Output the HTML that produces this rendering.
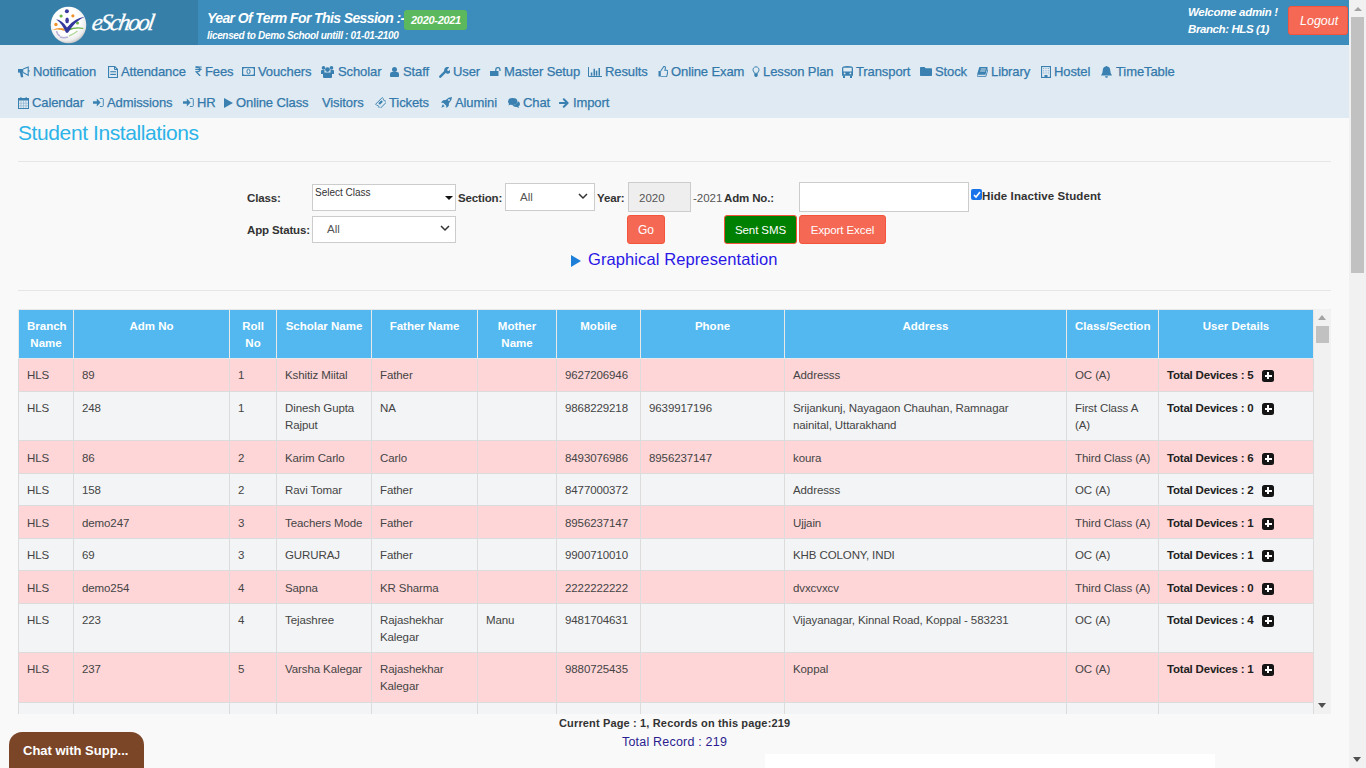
<!DOCTYPE html>
<html><head><meta charset="utf-8">
<style>
*{box-sizing:border-box;margin:0;padding:0}
html,body{width:1366px;height:768px;overflow:hidden;background:#f9f9f9;font-family:"Liberation Sans",sans-serif;color:#333}
.abs{position:absolute}
#hdr{position:absolute;left:0;top:0;width:1349px;height:45px;background:#3c8dbc}
#logo{position:absolute;left:0;top:0;width:198px;height:45px;background:#367fa9}
.wt{color:#fff;font-weight:bold;font-style:italic;white-space:nowrap;position:absolute}
#nav{position:absolute;left:0;top:45px;width:1349px;height:73px;background:#dfeaf2}
.ni{position:absolute;font-size:13px;color:#3378ab;white-space:nowrap;line-height:15px;letter-spacing:-0.1px;-webkit-text-stroke:0.25px #3378ab}
.ic{position:absolute;line-height:0}
.ic svg{display:block}
#vs{position:absolute;left:1349px;top:0;width:17px;height:768px;background:#f1f1f1}
.sel{position:absolute;background:#fff;border:1px solid #ccc}
.lbl{position:absolute;font-weight:bold;font-size:11.5px;letter-spacing:-0.15px;color:#333;white-space:nowrap;line-height:14px}
.btn{position:absolute;color:#fff;font-size:12px;text-align:center;border-radius:3px}
#tbl{position:absolute;left:0;top:0;border-collapse:collapse;table-layout:fixed;width:1295px}
#tbl td,#tbl th{border:1px solid #dcdcdc;padding:0 8px;vertical-align:top;font-size:11.5px;line-height:17px;overflow:hidden;white-space:nowrap;letter-spacing:-0.1px}
#tbl th{background:#52b8ef;color:#fff;text-align:center;font-weight:bold;padding-top:8px;border-color:#e8e8e8;letter-spacing:0}
#tbl td{padding-top:8px;color:#444}
#tbl tr.p td{background:#ffd6d8}
#tbl tr.g td{background:#f3f4f6}
.dev{font-weight:bold;color:#222;letter-spacing:-0.2px}
.plus{display:inline-block;width:12px;height:12.5px;background:#151515;border-radius:2.5px;position:relative;vertical-align:-3px;margin-left:8.5px}
.plus:before{content:"";position:absolute;left:2.5px;top:5.5px;width:7px;height:1.6px;background:#fff}
.plus:after{content:"";position:absolute;left:5.2px;top:2.8px;width:1.6px;height:7px;background:#fff}
</style></head><body>
<div id="hdr">
  <div id="logo">
    <div class="abs" style="left:48px;top:4px;line-height:0"><svg width="42" height="42" viewBox="0 0 42 42"><defs><radialGradient id="lg" cx="0.45" cy="0.4" r="0.6"><stop offset="0.6" stop-color="#ffffff"/><stop offset="0.88" stop-color="#ececec"/><stop offset="1" stop-color="#c9c9c9"/></radialGradient></defs>
<ellipse cx="20.5" cy="21" rx="17.8" ry="18.3" fill="url(#lg)"/>
<circle cx="18.9" cy="7.2" r="2" fill="#3b3a9e"/>
<circle cx="13.1" cy="12" r="1.6" fill="#6ab446"/>
<circle cx="24.9" cy="11.8" r="1.6" fill="#f0922a"/>
<circle cx="7.9" cy="20.5" r="1.7" fill="#f0922a"/>
<circle cx="29.5" cy="19.1" r="1.5" fill="#6ab446"/>
<ellipse cx="19.1" cy="16.4" rx="1.8" ry="2.8" fill="#3b3a9e"/>
<path d="M4.5 26q5-3 11.5-1.5l1 2.5q-6-2.5-12.5-1z" fill="#f0922a"/>
<path d="M20 25q8-3 15.5-1l-0.5 1q-7-1.5-14 1.5z" fill="#6ab446"/>
<path d="M8 15.3Q14 16 19 23.5Q26 14.5 36.8 12.8Q27 17 20 28.8H18Q14 19.5 8 15.3z" fill="#33399a"/>
<path d="M8.5 27q1 4 3.5 5M12 33q4 1.5 8 0" stroke="#b8b0d8" stroke-width="1.4" fill="none"/>
<path d="M21 32q5-2 8.5-5" stroke="#b5d9a0" stroke-width="1.4" fill="none"/>
</svg></div>
    <div class="abs" style="left:90px;top:9.5px;font-family:'Liberation Serif',serif;font-style:italic;font-size:23.5px;line-height:25px;color:#fff;letter-spacing:-2px;transform:skewX(-10deg);transform-origin:0 100%;-webkit-text-stroke:0.3px #fff">eSchool</div>
  </div>
  <div class="wt" style="left:207px;top:11px;font-size:14px;letter-spacing:-0.6px;line-height:15px">Year Of Term For This Session :-</div>
  <div class="abs" style="left:404px;top:10px;width:63px;height:20px;background:#5cb85c;border-radius:3px"></div>
  <div class="wt" style="left:411px;top:14px;font-size:11px;letter-spacing:-0.3px;line-height:12px">2020-2021</div>
  <div class="wt" style="left:207px;top:30px;font-size:10px;letter-spacing:-0.33px;line-height:11px">licensed to Demo School untill : 01-01-2100</div>
  <div class="wt" style="left:1188px;top:6px;font-size:11.5px;letter-spacing:-0.3px;line-height:12px">Welcome admin !</div>
  <div class="wt" style="left:1188px;top:23px;font-size:11.5px;letter-spacing:-0.4px;line-height:12px">Branch: HLS (1)</div>
  <div class="abs" style="left:1288px;top:6px;width:60px;height:29px;background:#f56954;border:1px solid #f4543c;border-radius:3px"></div>
  <div class="abs" style="left:1300px;top:14px;font-size:12.5px;line-height:15px;font-style:italic;color:#fff">Logout</div>
</div>
<div id="nav">
<div class="ic" style="left:18px;top:21px"><svg width="12" height="12" viewBox="0 0 12 12"><path d="M0 3h5.3v3.6h-5.3z" fill="#3a80b0"/><path d="M1.8 6h2.8l0.6 5.2h-2.3z" fill="#3a80b0"/><path d="M5.2 3.1L10.2 1v8.4L5.2 6.6" stroke="#3a80b0" stroke-width="1.1" fill="none"/><path d="M10.3 4h1.2v1.8h-1.2z" fill="#3a80b0"/></svg></div>
<div class="ni" style="left:33px;top:19px">Notification</div>
<div class="ic" style="left:108px;top:21px"><svg width="10" height="12" viewBox="0 0 10 12"><path d="M0.55 0.55h6.2l2.7 2.7v8.2h-8.9z" fill="none" stroke="#3a80b0" stroke-width="1.1"/><path d="M6.5 0.5v3h3" fill="none" stroke="#3a80b0" stroke-width="1"/><path d="M2.3 5.7h5.6M2.3 8.5h5.6" stroke="#3a80b0" stroke-width="1"/><path d="M2.3 7.1h5.6" stroke="#3a80b0" stroke-width="0.8" opacity="0.35"/></svg></div>
<div class="ni" style="left:121px;top:19px">Attendance</div>
<div class="ic" style="left:195px;top:21px"><svg width="7" height="10" viewBox="0 0 7 10"><path d="M0.3 1h6.4M0.3 3.4h6.4" stroke="#3a80b0" stroke-width="1.2"/><path d="M0.8 1q4.2 0 4.2 2.4 0 2.3-3.8 2.4l4 4.2" stroke="#3a80b0" stroke-width="1.3" fill="none"/></svg></div>
<div class="ni" style="left:205px;top:19px">Fees</div>
<div class="ic" style="left:242px;top:22px"><svg width="13" height="9" viewBox="0 0 13 9"><rect x="0.6" y="0.6" width="11.8" height="7.8" fill="none" stroke="#3a80b0" stroke-width="1.2"/><path d="M0 0h3l-3 3zM13 0h-3l3 3zM0 9h3l-3-3zM13 9h-3l3-3z" fill="#3a80b0"/><ellipse cx="6.5" cy="4.5" rx="1.6" ry="2.3" fill="none" stroke="#3a80b0" stroke-width="1"/></svg></div>
<div class="ni" style="left:258px;top:19px">Vouchers</div>
<div class="ic" style="left:321px;top:21px"><svg width="13" height="12" viewBox="0 0 13 12"><circle cx="2.5" cy="1.9" r="1.8" fill="#3a80b0"/><circle cx="10.5" cy="1.9" r="1.8" fill="#3a80b0"/><circle cx="6.5" cy="3.6" r="2.4" fill="#3a80b0"/><path d="M0 5q0-1 1-1h2.5v4h-3.5zM13 5q0-1-1-1h-2.5v4h3.5z" fill="#3a80b0"/><path d="M2 8q0-1.5 1.5-1.5h6q1.5 0 1.5 1.5v3q0 1-1 1h-7q-1 0-1-1z" fill="#3a80b0"/></svg></div>
<div class="ni" style="left:338px;top:19px">Scholar</div>
<div class="ic" style="left:390px;top:22px"><svg width="9" height="10" viewBox="0 0 9 10"><circle cx="4.5" cy="2.5" r="2.5" fill="#3a80b0"/><path d="M0 7q0-2 2-2h5q2 0 2 2v2.2q0 0.8-0.8 0.8h-7.4q-0.8 0-0.8-0.8z" fill="#3a80b0"/></svg></div>
<div class="ni" style="left:403px;top:19px">Staff</div>
<div class="ic" style="left:439px;top:22px"><svg width="11" height="11" viewBox="0 0 11 11"><path d="M1.3 9.7l5-5" stroke="#3a80b0" stroke-width="2.4" stroke-linecap="round"/><path d="M5.2 3.8a3.3 3.3 0 0 1 5-3.4l-2 2.1 0.3 1.2 1.2 0.3 2-2a3.3 3.3 0 0 1-4.2 4.5z" fill="#3a80b0"/></svg></div>
<div class="ni" style="left:453px;top:19px">User</div>
<div class="ic" style="left:490px;top:22px"><svg width="11" height="9" viewBox="0 0 11 9"><rect x="0" y="4" width="8.5" height="5" fill="#3a80b0"/><path d="M5.8 4.5v-1.8a2.1 2.1 0 0 1 4.2 0v1.3" stroke="#3a80b0" stroke-width="1.3" fill="none"/></svg></div>
<div class="ni" style="left:504px;top:19px">Master Setup</div>
<div class="ic" style="left:588px;top:22px"><svg width="14" height="10" viewBox="0 0 14 10"><path d="M0.5 0v9.5h13.5" stroke="#3a80b0" stroke-width="1" fill="none"/><path d="M2.8 5.5h1.5v3.3h-1.5zM5.5 1.8h1.5v7h-1.5zM7.8 3.8h1.5v5h-1.5zM10.5 1h1.5v7.8h-1.5z" fill="#3a80b0"/></svg></div>
<div class="ni" style="left:605px;top:19px">Results</div>
<div class="ic" style="left:658px;top:21px"><svg width="10" height="11" viewBox="0 0 10 11"><path d="M0.5 5h2.3v5.5h-2.3z" fill="#3a80b0"/><path d="M2.8 5l2.4-3.8q0.3-0.7 1-0.7q1.3 0 1.3 1.3l-0.6 2.5h2q1 0 0.9 1l-0.9 4.5q-0.3 1-1.3 1h-4.8" fill="none" stroke="#3a80b0" stroke-width="1.05"/></svg></div>
<div class="ni" style="left:671px;top:19px">Online Exam</div>
<div class="ic" style="left:752px;top:21px"><svg width="8" height="11" viewBox="0 0 8 11"><path d="M2.4 7.3q-0.2-1.3-1.2-2.4a3 3 0 1 1 5.6 0q-1 1.1-1.2 2.4z" fill="none" stroke="#3a80b0" stroke-width="1"/><path d="M2.3 7.8h3.4v1.6q-0.4 1.6-1.7 1.6t-1.7-1.6z" fill="#3a80b0"/></svg></div>
<div class="ni" style="left:763px;top:19px">Lesson Plan</div>
<div class="ic" style="left:842px;top:21px"><svg width="11" height="12" viewBox="0 0 11 12"><path d="M0 2.3q0-2.3 5.5-2.3t5.5 2.3v7.5h-11z" fill="#3a80b0"/><rect x="1.3" y="1.8" width="8.4" height="3.6" rx="0.5" fill="#dfeaf2"/><circle cx="2.6" cy="7.4" r="0.9" fill="#dfeaf2"/><circle cx="8.4" cy="7.4" r="0.9" fill="#dfeaf2"/><path d="M1 9.5h2v2.5h-2zM8 9.5h2v2.5h-2z" fill="#3a80b0"/></svg></div>
<div class="ni" style="left:856px;top:19px">Transport</div>
<div class="ic" style="left:920px;top:22px"><svg width="12" height="9" viewBox="0 0 12 9"><path d="M0 0.8q0-0.8 0.8-0.8h3.7l1.2 1.2h5.5q0.8 0 0.8 0.8v6.2q0 0.8-0.8 0.8h-10.4q-0.8 0-0.8-0.8z" fill="#3a80b0"/></svg></div>
<div class="ni" style="left:935px;top:19px">Stock</div>
<div class="ic" style="left:977px;top:22px"><svg width="11" height="10" viewBox="0 0 11 10"><path d="M2.3 0h8.4l-2.3 7.8h-8.4z" fill="#3a80b0"/><path d="M0.3 7.8l-0.1 1q0 0.6 0.6 0.6h8.1l2.3-8" stroke="#3a80b0" stroke-width="0.9" fill="none"/><path d="M3.8 2h5M3.2 4h5" stroke="#dfeaf2" stroke-width="0.9"/></svg></div>
<div class="ni" style="left:991px;top:19px">Library</div>
<div class="ic" style="left:1041px;top:21px"><svg width="10" height="12" viewBox="0 0 10 12"><rect x="0.55" y="0.55" width="8.9" height="10.9" fill="none" stroke="#3a80b0" stroke-width="1.1"/><path d="M2.2 2h1v1h-1zM4.5 2h1v1h-1zM6.8 2h1v1h-1zM2.2 4.3h1v1h-1zM4.5 4.3h1v1h-1zM6.8 4.3h1v1h-1zM2.2 6.6h1v1h-1zM4.5 6.6h1v1h-1zM6.8 6.6h1v1h-1z" fill="#3a80b0" opacity="0.6"/><path d="M3.5 9h3v3h-3z" fill="#3a80b0"/></svg></div>
<div class="ni" style="left:1054px;top:19px">Hostel</div>
<div class="ic" style="left:1101px;top:21px"><svg width="11" height="12" viewBox="0 0 11 12"><path d="M5.5 0.5q3.8 0 3.8 4.3q0 3 1.7 4.7h-11q1.7-1.7 1.7-4.7q0-4.3 3.8-4.3z" fill="#3a80b0"/><circle cx="5.5" cy="0.8" r="0.8" fill="#3a80b0"/><path d="M4 10.3a1.5 1.5 0 0 0 3 0z" fill="#3a80b0"/></svg></div>
<div class="ni" style="left:1116px;top:19px">TimeTable</div>
<div class="ic" style="left:18px;top:52px"><svg width="11" height="12" viewBox="0 0 11 12"><rect x="0.5" y="1.5" width="10" height="10" fill="none" stroke="#3a80b0" stroke-width="1"/><path d="M0.5 1.5h10v2h-10z" fill="#3a80b0"/><path d="M2.8 0.3v2.2M8.2 0.3v2.2" stroke="#3a80b0" stroke-width="1.3"/><path d="M3 3.5v8M5.5 3.5v8M8 3.5v8M0.5 6.2h10M0.5 8.8h10" stroke="#3a80b0" stroke-width="0.6" opacity="0.55"/></svg></div>
<div class="ni" style="left:32px;top:50px">Calendar</div>
<div class="ic" style="left:93px;top:53px"><svg width="11" height="9" viewBox="0 0 11 9"><path d="M0 3.2h3.8v-2.7l3.8 4-3.8 4v-2.7h-3.8z" fill="#3a80b0"/><path d="M6.8 0.5h2.6q0.9 0 0.9 0.9v6.2q0 0.9-0.9 0.9h-2.6" stroke="#3a80b0" stroke-width="0.9" fill="none"/></svg></div>
<div class="ni" style="left:107px;top:50px">Admissions</div>
<div class="ic" style="left:183px;top:53px"><svg width="11" height="9" viewBox="0 0 11 9"><path d="M0 3.2h3.8v-2.7l3.8 4-3.8 4v-2.7h-3.8z" fill="#3a80b0"/><path d="M6.8 0.5h2.6q0.9 0 0.9 0.9v6.2q0 0.9-0.9 0.9h-2.6" stroke="#3a80b0" stroke-width="0.9" fill="none"/></svg></div>
<div class="ni" style="left:197px;top:50px">HR</div>
<div class="ic" style="left:224px;top:53px"><svg width="9" height="10" viewBox="0 0 9 10"><path d="M0 0l9 5-9 5z" fill="#3a80b0"/></svg></div>
<div class="ni" style="left:236px;top:50px">Online Class</div>
<div class="ni" style="left:322px;top:50px">Visitors</div>
<div class="ic" style="left:375px;top:52px"><svg width="11" height="11" viewBox="0 0 11 11"><path d="M0.6 7.2l6.6-6.6 1.3 1.3q-0.4 0.9 0.3 1.5t1.5 0.3l1.3 1.3-6.6 6.6-1.3-1.3q0.4-0.9-0.3-1.5t-1.5-0.3z" fill="none" stroke="#3a80b0" stroke-width="1"/><path d="M3.3 6.2l3-3 1.6 1.6-3 3z" fill="#3a80b0"/></svg></div>
<div class="ni" style="left:389px;top:50px">Tickets</div>
<div class="ic" style="left:441px;top:52px"><svg width="11" height="11" viewBox="0 0 11 11"><path d="M11 0q-3.5 0-6.3 3l-2.6 0.3-2.1 2.3 2.4 0.3 2.7 2.7 0.3 2.4 2.3-2.1 0.3-2.6q3-2.8 3-6.3z" fill="#3a80b0"/><circle cx="8" cy="3" r="0.9" fill="#dfeaf2"/><path d="M1.8 7.3l-1.5 3.4 3.4-1.5z" fill="#3a80b0"/></svg></div>
<div class="ni" style="left:455px;top:50px">Alumini</div>
<div class="ic" style="left:508px;top:53px"><svg width="12" height="10" viewBox="0 0 12 10"><ellipse cx="4.7" cy="3.5" rx="4.7" ry="3.4" fill="#3a80b0"/><path d="M1.2 5.5l-0.8 2 2.6-1.2z" fill="#3a80b0"/><path d="M10.2 3.2q1.8 1 1.8 2.7t-1.6 2.5l0.9 1.5-2.7-1q-2.8 0.2-4.3-1.6q3.8-0.2 5.9-4.1z" fill="#3a80b0"/></svg></div>
<div class="ni" style="left:523px;top:50px">Chat</div>
<div class="ic" style="left:559px;top:53px"><svg width="10" height="10" viewBox="0 0 10 10"><path d="M0.8 5h7.2M4.8 1.3l3.8 3.7-3.8 3.7" stroke="#3a80b0" stroke-width="2" fill="none" stroke-linecap="round" stroke-linejoin="round"/></svg></div>
<div class="ni" style="left:573px;top:50px">Import</div>
</div>

<div class="abs" style="left:18px;top:121px;font-size:21px;letter-spacing:-0.4px;color:#2cb3e8;line-height:24px;white-space:nowrap">Student Installations</div>
<div class="abs" style="left:18px;top:161px;width:1313px;height:1px;background:#e6e6e6"></div>
<div class="lbl" style="left:247px;top:191px">Class:</div>
<div class="sel" style="left:312px;top:184px;width:144px;height:27px"></div>
<div class="abs" style="left:315px;top:187px;font-size:10px;color:#333;line-height:11px">Select Class</div>
<div class="abs" style="left:445px;top:196px;width:0;height:0;border-left:4px solid transparent;border-right:4px solid transparent;border-top:4px solid #111"></div>
<div class="lbl" style="left:458px;top:191px">Section:</div>
<div class="sel" style="left:505px;top:183px;width:90px;height:28px"></div>
<div class="abs" style="left:520px;top:191px;font-size:11.5px;color:#555;line-height:13px">All</div>
<div class="abs" style="left:578px;top:193px;line-height:0"><svg width="10" height="7" viewBox="0 0 10 7"><path d="M1 1l4 4 4-4" stroke="#333" stroke-width="1.5" fill="none"/></svg></div>
<div class="lbl" style="left:597px;top:191px">Year:</div>
<div class="abs" style="left:628px;top:182px;width:63px;height:30px;background:#eee;border:1px solid #ccc"></div>
<div class="abs" style="left:639px;top:192px;font-size:11.5px;color:#555;line-height:13px">2020</div>
<div class="abs" style="left:693px;top:192px;font-size:11.5px;color:#555;line-height:13px">-2021</div>
<div class="lbl" style="left:724px;top:191px">Adm No.:</div>
<div class="sel" style="left:799px;top:182px;width:170px;height:30px"></div>
<div class="abs" style="left:971px;top:189px;width:11px;height:11px;border-radius:2px;background:#1a73e8"></div>
<div class="abs" style="left:972.5px;top:190.5px;line-height:0"><svg width="8" height="8" viewBox="0 0 8 8"><path d="M1 4l2 2 4-5" stroke="#fff" stroke-width="1.6" fill="none"/></svg></div>
<div class="lbl" style="left:982px;top:189px;letter-spacing:0.1px">Hide Inactive Student</div>
<div class="lbl" style="left:247px;top:223px">App Status:</div>
<div class="sel" style="left:312px;top:216px;width:144px;height:27px"></div>
<div class="abs" style="left:327px;top:223px;font-size:11.5px;color:#555;line-height:13px">All</div>
<div class="abs" style="left:440px;top:225px;line-height:0"><svg width="10" height="7" viewBox="0 0 10 7"><path d="M1 1l4 4 4-4" stroke="#333" stroke-width="1.5" fill="none"/></svg></div>
<div class="btn" style="left:627px;top:215px;width:38px;height:29px;background:#f56954;border:1px solid #f4543c;line-height:28px;font-size:12px">Go</div>
<div class="btn" style="left:724px;top:215px;width:73px;height:29px;background:#008000;border:1px solid #f4543c;line-height:28px;font-size:11.5px;letter-spacing:-0.1px">Sent SMS</div>
<div class="btn" style="left:799px;top:215px;width:87px;height:29px;background:#f56954;border:1px solid #f4543c;line-height:28px;font-size:11.5px;letter-spacing:-0.1px">Export Excel</div>
<div class="abs" style="left:570px;top:254px;line-height:0"><svg width="12" height="14" viewBox="0 0 12 14"><path d="M1 1l10 6-10 6z" fill="#1e7fd8"/></svg></div>
<div class="abs" style="left:588px;top:250px;font-size:16.5px;color:#2a17e6;line-height:19px;white-space:nowrap;letter-spacing:0.1px">Graphical Representation</div>
<div class="abs" style="left:18px;top:290px;width:1313px;height:1px;background:#e6e6e6"></div>
<div class="abs" style="left:18px;top:309px;width:1296px;height:405px;overflow:hidden">
<table id="tbl"><colgroup><col style="width:55px"><col style="width:156px"><col style="width:47px"><col style="width:95px"><col style="width:106px"><col style="width:79px"><col style="width:84px"><col style="width:144px"><col style="width:282px"><col style="width:92px"><col style="width:155px"></colgroup>
<tr style="height:49px"><th>Branch<br>Name</th><th>Adm No</th><th>Roll<br>No</th><th>Scholar Name</th><th>Father Name</th><th>Mother<br>Name</th><th>Mobile</th><th>Phone</th><th>Address</th><th>Class/Section</th><th>User Details</th></tr>
<tr class="p" style="height:33px"><td>HLS</td><td>89</td><td>1</td><td>Kshitiz Miital</td><td>Father</td><td></td><td>9627206946</td><td></td><td>Addresss</td><td>OC (A)</td><td><span class="dev">Total Devices : 5</span><span class="plus"></span></td></tr>
<tr class="g" style="height:49px"><td>HLS</td><td>248</td><td>1</td><td>Dinesh Gupta<br>Rajput</td><td>NA</td><td></td><td>9868229218</td><td>9639917196</td><td>Srijankunj, Nayagaon Chauhan, Ramnagar<br>nainital, Uttarakhand</td><td>First Class A<br>(A)</td><td><span class="dev">Total Devices : 0</span><span class="plus"></span></td></tr>
<tr class="p" style="height:33px"><td style="padding-top:9px">HLS</td><td style="padding-top:9px">86</td><td style="padding-top:9px">2</td><td style="padding-top:9px">Karim Carlo</td><td style="padding-top:9px">Carlo</td><td style="padding-top:9px"></td><td style="padding-top:9px">8493076986</td><td style="padding-top:9px">8956237147</td><td style="padding-top:9px">koura</td><td style="padding-top:9px">Third Class (A)</td><td style="padding-top:9px"><span class="dev">Total Devices : 6</span><span class="plus"></span></td></tr>
<tr class="g" style="height:32px"><td>HLS</td><td>158</td><td>2</td><td>Ravi Tomar</td><td>Father</td><td></td><td>8477000372</td><td></td><td>Addresss</td><td>OC (A)</td><td><span class="dev">Total Devices : 2</span><span class="plus"></span></td></tr>
<tr class="p" style="height:33px"><td style="padding-top:9px">HLS</td><td style="padding-top:9px">demo247</td><td style="padding-top:9px">3</td><td style="padding-top:9px">Teachers Mode</td><td style="padding-top:9px">Father</td><td style="padding-top:9px"></td><td style="padding-top:9px">8956237147</td><td style="padding-top:9px"></td><td style="padding-top:9px">Ujjain</td><td style="padding-top:9px">Third Class (A)</td><td style="padding-top:9px"><span class="dev">Total Devices : 1</span><span class="plus"></span></td></tr>
<tr class="g" style="height:32px"><td>HLS</td><td>69</td><td>3</td><td>GURURAJ</td><td>Father</td><td></td><td>9900710010</td><td></td><td>KHB COLONY, INDI</td><td>OC (A)</td><td><span class="dev">Total Devices : 1</span><span class="plus"></span></td></tr>
<tr class="p" style="height:33px"><td style="padding-top:9px">HLS</td><td style="padding-top:9px">demo254</td><td style="padding-top:9px">4</td><td style="padding-top:9px">Sapna</td><td style="padding-top:9px">KR Sharma</td><td style="padding-top:9px"></td><td style="padding-top:9px">2222222222</td><td style="padding-top:9px"></td><td style="padding-top:9px">dvxcvxcv</td><td style="padding-top:9px">Third Class (A)</td><td style="padding-top:9px"><span class="dev">Total Devices : 0</span><span class="plus"></span></td></tr>
<tr class="g" style="height:49px"><td>HLS</td><td>223</td><td>4</td><td>Tejashree</td><td>Rajashekhar<br>Kalegar</td><td>Manu</td><td>9481704631</td><td></td><td>Vijayanagar, Kinnal Road, Koppal - 583231</td><td>OC (A)</td><td><span class="dev">Total Devices : 4</span><span class="plus"></span></td></tr>
<tr class="p" style="height:50px"><td>HLS</td><td>237</td><td>5</td><td>Varsha Kalegar</td><td>Rajashekhar<br>Kalegar</td><td></td><td>9880725435</td><td></td><td>Koppal</td><td>OC (A)</td><td><span class="dev">Total Devices : 1</span><span class="plus"></span></td></tr>
<tr class="g" style="height:40px"><td>HLS</td><td></td><td></td><td></td><td></td><td></td><td></td><td></td><td></td><td></td><td></td></tr>
</table>
</div>
<div class="abs" style="left:1314px;top:309px;width:17px;height:405px;background:#f1f1f1"></div>
<div class="abs" style="left:1318px;top:315px;width:0;height:0;border-left:4.5px solid transparent;border-right:4.5px solid transparent;border-bottom:5px solid #a3a3a3"></div>
<div class="abs" style="left:1316px;top:326px;width:13px;height:17px;background:#c1c1c1"></div>
<div class="abs" style="left:1318px;top:703px;width:0;height:0;border-left:4.5px solid transparent;border-right:4.5px solid transparent;border-top:5px solid #505050"></div>
<div class="abs" style="left:559px;top:716px;font-size:11px;font-weight:bold;color:#333;line-height:14px;white-space:nowrap;letter-spacing:0.15px">Current Page : 1, Records on this page:219</div>
<div class="abs" style="left:622px;top:735px;font-size:12.5px;color:#2b1d8f;line-height:15px;white-space:nowrap;letter-spacing:0.2px">Total Record : 219</div>
<div class="abs" style="left:9px;top:732px;width:135px;height:40px;background:#7b4527;border-radius:13px 13px 0 0"></div>
<div class="abs" style="left:23px;top:743px;font-size:13px;font-weight:bold;color:#fff;line-height:15px;white-space:nowrap;letter-spacing:0px">Chat with Supp...</div>
<div class="abs" style="left:765px;top:754px;width:450px;height:14px;background:#fff"></div>
<div id="vs"></div>
<div class="abs" style="left:1353.5px;top:6.5px;width:0;height:0;border-left:4px solid transparent;border-right:4px solid transparent;border-bottom:4.5px solid #a3a3a3"></div>
<div class="abs" style="left:1351px;top:17px;width:13px;height:256px;background:#c1c1c1"></div>
<div class="abs" style="left:1353px;top:757px;width:0;height:0;border-left:4.5px solid transparent;border-right:4.5px solid transparent;border-top:5px solid #505050"></div>

</body></html>
